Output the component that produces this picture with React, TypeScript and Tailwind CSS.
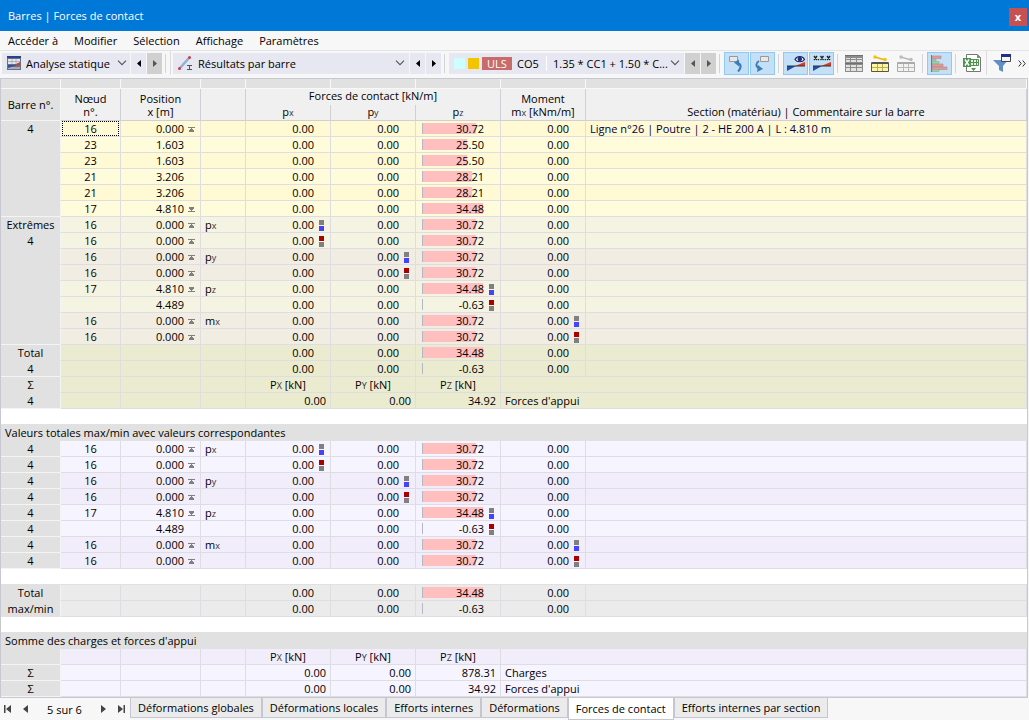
import { ReactNode, useState } from 'react'
import clsx from 'clsx'

type TMark = 'max' | 'min'
type TEnd = 'start' | 'end'

interface IRow {
  label?: string
  joined?: boolean
  node?: string
  position?: string
  end?: TEnd
  symbol?: string
  pz: number
  marks?: { column: number; kind: TMark }
  comment?: string
  focused?: boolean
  bg: string
}

interface ISumRow {
  label?: string
  joined?: boolean
  values?: string[]
  text?: string
  bg: string
}

const MAX_PZ = 34.48
const MAX_BAR = 60

const memberRows: IRow[] = [
  { label: '4', joined: true, node: '16', position: '0.000', end: 'start', pz: 30.72, comment: 'Ligne n°26 | Poutre | 2 - HE 200 A | L : 4.810 m', focused: true, bg: 'bg-[#fff9d4]' },
  { joined: true, node: '23', position: '1.603', pz: 25.5, bg: 'bg-[#fffcdc]' },
  { joined: true, node: '23', position: '1.603', pz: 25.5, bg: 'bg-[#fff9d4]' },
  { joined: true, node: '21', position: '3.206', pz: 28.21, bg: 'bg-[#fffcdc]' },
  { joined: true, node: '21', position: '3.206', pz: 28.21, bg: 'bg-[#fff9d4]' },
  { node: '17', position: '4.810', end: 'end', pz: 34.48, bg: 'bg-[#fffcdc]' },
]

const extremes: Omit<IRow, 'bg'>[] = [
  { node: '16', position: '0.000', end: 'start', symbol: 'px', pz: 30.72, marks: { column: 0, kind: 'max' } },
  { node: '16', position: '0.000', end: 'start', pz: 30.72, marks: { column: 0, kind: 'min' } },
  { node: '16', position: '0.000', end: 'start', symbol: 'py', pz: 30.72, marks: { column: 1, kind: 'max' } },
  { node: '16', position: '0.000', end: 'start', pz: 30.72, marks: { column: 1, kind: 'min' } },
  { node: '17', position: '4.810', end: 'end', symbol: 'pz', pz: 34.48, marks: { column: 2, kind: 'max' } },
  { position: '4.489', pz: -0.63, marks: { column: 2, kind: 'min' } },
  { node: '16', position: '0.000', end: 'start', symbol: 'mx', pz: 30.72, marks: { column: 3, kind: 'max' } },
  { node: '16', position: '0.000', end: 'start', pz: 30.72, marks: { column: 3, kind: 'min' } },
]

const extremeRows: IRow[] = extremes.map((row, i) => ({
  ...row,
  label: ['Extrêmes', '4'][i],
  joined: i < 7,
  bg: i % 4 < 2 ? 'bg-[#f5f4e2]' : 'bg-[#f2ede2]',
}))

const overallRows: IRow[] = extremes.map((row, i) => ({
  ...row,
  label: '4',
  bg: i % 4 < 2 ? 'bg-[#f6f4ff]' : 'bg-[#f1edfb]',
}))

const tabs = ['Déformations globales', 'Déformations locales', 'Efforts internes', 'Déformations', 'Forces de contact', 'Efforts internes par section']
const menus = ['Accéder à', 'Modifier', 'Sélection', 'Affichage', 'Paramètres']

function Symbol({ name }: { name: string }) {
  return (
    <span>
      {name[0]}
      <span className="text-[9px] leading-none text-[#333]">{name[1]}</span>
    </span>
  )
}

function EndIcon({ end }: { end: TEnd }) {
  return (
    <svg width="7" height="5" viewBox="0 0 7 5" fill="#808080" shapeRendering="crispEdges" aria-hidden="true">
      {end === 'start' ? <path d="M0 0h7v1H0zM3 1h1v1h1v1h1v2H1V3h1V2h1z" /> : <path d="M0 4h7v1H0zM1 0h5v2H5v1H4v1H3V3H2V2H1z" />}
    </svg>
  )
}

function ExtremeMark({ kind }: { kind: TMark }) {
  return (
    <span className="flex flex-col gap-px">
      <span className={clsx('w-[5px] h-[5px]', kind === 'max' ? 'bg-[#808080]' : 'bg-[#aa0000]')} />
      <span className={clsx('w-[5px] h-[5px]', kind === 'max' ? 'bg-[#4444ff]' : 'bg-[#808080]')} />
    </span>
  )
}

function Cell({ children, className, ...rest }: { children?: ReactNode; className?: string; colSpan?: number }) {
  return (
    <td className={clsx('h-4 p-0 leading-[15px] border-b border-r border-[#dedee2]', className)} {...rest}>
      {children}
    </td>
  )
}

function RowLabel({ label, joined }: { label?: string; joined?: boolean }) {
  return (
    <th
      scope="row"
      className={clsx(
        'h-4 p-0 leading-[15px] font-normal text-center bg-[#e1e1e1] border-b border-r border-r-[#f4f4f4]',
        joined ? 'border-b-[#e1e1e1]' : 'border-b-[#f4f4f4]',
      )}
    >
      {label}
    </th>
  )
}

function NumberCell({ value, mark }: { value: string; mark?: TMark }) {
  return (
    <Cell>
      <div className="flex items-center justify-end h-[15px]">
        {value}
        <span className="w-4 pl-[5px] pt-[2px]">{mark && <ExtremeMark kind={mark} />}</span>
      </div>
    </Cell>
  )
}

function BarCell({ value, mark }: { value: number; mark?: TMark }) {
  const width = Math.max(0, Math.round((value / MAX_PZ) * MAX_BAR))
  return (
    <Cell>
      <div className="relative flex items-center justify-end h-[15px]">
        <span className="absolute left-[6px] top-[2px] h-[11px] bg-[#ffbfbf] border-l border-[#b4b8c4] box-content" style={{ width }} />
        <span className="relative">{value.toFixed(2)}</span>
        <span className="w-4 pl-[5px] pt-[2px]">{mark && <ExtremeMark kind={mark} />}</span>
      </div>
    </Cell>
  )
}

function ResultRow({ row }: { row: IRow }) {
  const markOf = (column: number) => (row.marks?.column === column ? row.marks.kind : undefined)
  return (
    <tr className={row.bg}>
      <RowLabel label={row.label} joined={row.joined} />
      <Cell className="text-center">
        <div className={clsx('h-[15px] mx-px', row.focused && 'outline-1 outline-dotted -outline-offset-1 outline-black')}>{row.node}</div>
      </Cell>
      <Cell>
        <div className="flex items-center justify-end h-[15px]">
          {row.position}
          <span className="flex items-center w-4 h-[15px] pl-1 pt-[2px]">{row.end && <EndIcon end={row.end} />}</span>
        </div>
      </Cell>
      <Cell className="pl-1">{row.symbol && <Symbol name={row.symbol} />}</Cell>
      <NumberCell value="0.00" mark={markOf(0)} />
      <NumberCell value="0.00" mark={markOf(1)} />
      <BarCell value={row.pz} mark={markOf(2)} />
      <NumberCell value="0.00" mark={markOf(3)} />
      <Cell className="pl-1 text-[#000040]">{row.comment}</Cell>
    </tr>
  )
}

// without values the row shows the units of the support forces
function SumRow({ row }: { row: ISumRow }) {
  return (
    <tr className={row.bg}>
      <RowLabel label={row.label} joined={row.joined} />
      <Cell />
      <Cell />
      <Cell />
      {row.values
        ? row.values.map((value, i) => <Cell key={i} className="text-right pr-1">{value}</Cell>)
        : ['PX', 'PY', 'PZ'].map((name) => <Cell key={name} className="text-center"><Symbol name={name} /> [kN]</Cell>)}
      <Cell className="pl-1" colSpan={2}>{row.text}</Cell>
    </tr>
  )
}

function BlankRow() {
  return (
    <tr className="bg-white">
      <td colSpan={9} className="h-4 p-0 border-b border-[#e1e1e1]" />
    </tr>
  )
}

function SectionRow({ title }: { title: string }) {
  return (
    <tr className="bg-[#e1e1e1]">
      <th colSpan={9} scope="colgroup" className="h-4 p-0 pl-1 leading-4 text-left font-normal">{title}</th>
    </tr>
  )
}

function ResultTable() {
  const head = 'p-0 font-normal leading-[13px] align-bottom border-b border-r border-[#cfcfd4]'
  return (
    <table className="w-full table-fixed border-separate border-spacing-0">
      <colgroup>
        <col className="w-[60px]" />
        <col className="w-[60px]" />
        <col className="w-[80px]" />
        <col className="w-[45px]" />
        <col className="w-[85px]" />
        <col className="w-[85px]" />
        <col className="w-[85px]" />
        <col className="w-[85px]" />
        <col />
      </colgroup>
      <thead className="bg-[#f0f0f0]">
        <tr className="bg-[#e1e1e1]">
          {Array.from({ length: 9 }, (_, i) => (
            <td key={i} className="h-[10px] p-0 border-b border-r border-[#f8f8f8]" />
          ))}
        </tr>
        <tr>
          <th rowSpan={2} className="p-0 font-normal bg-[#e1e1e1] border-b border-r border-[#f4f4f4]">Barre n°.</th>
          <th rowSpan={2} className={clsx(head, 'pb-[2px]')}>Nœud<br />n°.</th>
          <th rowSpan={2} className={clsx(head, 'pb-[2px]')}>Position<br />x [m]</th>
          <th rowSpan={2} className={head} />
          <th colSpan={3} className="h-4 p-0 font-normal leading-[13px] align-top border-r border-[#cfcfd4]">Forces de contact [kN/m]</th>
          <th rowSpan={2} className={clsx(head, 'pb-[2px]')}>Moment<br /><Symbol name="mx" /> [kNm/m]</th>
          <th rowSpan={2} className={clsx(head, 'pb-[2px]')}>Section (matériau) | Commentaire sur la barre</th>
        </tr>
        <tr>
          {['px', 'py', 'pz'].map((name) => (
            <th key={name} className={clsx(head, 'h-4 pb-[2px]')}><Symbol name={name} /></th>
          ))}
        </tr>
      </thead>
      <tbody>
        {memberRows.map((row, i) => <ResultRow key={i} row={row} />)}
        {extremeRows.map((row, i) => <ResultRow key={i} row={row} />)}
        <ResultRow row={{ label: 'Total', joined: true, pz: 34.48, bg: 'bg-[#ebebd0]' }} />
        <ResultRow row={{ label: '4', pz: -0.63, bg: 'bg-[#ebebd0]' }} />
        <SumRow row={{ label: 'Σ', joined: true, bg: 'bg-[#ebebd0]' }} />
        <SumRow row={{ label: '4', values: ['0.00', '0.00', '34.92'], text: "Forces d'appui", bg: 'bg-[#ebebd0]' }} />
        <BlankRow />
        <SectionRow title="Valeurs totales max/min avec valeurs correspondantes" />
        {overallRows.map((row, i) => <ResultRow key={i} row={row} />)}
        <BlankRow />
        <ResultRow row={{ label: 'Total', joined: true, pz: 34.48, bg: 'bg-[#ebebeb]' }} />
        <ResultRow row={{ label: 'max/min', joined: true, pz: -0.63, bg: 'bg-[#ebebeb]' }} />
        <BlankRow />
        <SectionRow title="Somme des charges et forces d'appui" />
        <SumRow row={{ bg: 'bg-[#f1edfb]' }} />
        <SumRow row={{ label: 'Σ', values: ['0.00', '0.00', '878.31'], text: 'Charges', bg: 'bg-[#f6f4ff]' }} />
        <SumRow row={{ label: 'Σ', values: ['0.00', '0.00', '34.92'], text: "Forces d'appui", bg: 'bg-[#f6f4ff]' }} />
      </tbody>
    </table>
  )
}

function Chevron() {
  return (
    <svg className="shrink-0 pointer-events-none" width="10" height="6" viewBox="0 0 10 6" fill="none" stroke="#555" strokeWidth="1.1" aria-hidden="true">
      <path d="M1 .7 5 4.7 9 .7" />
    </svg>
  )
}

function StepButton({ dir, label, disabled }: { dir: 'prev' | 'next'; label: string; disabled?: boolean }) {
  return (
    <button
      type="button"
      aria-label={label}
      disabled={disabled}
      className={clsx('flex items-center justify-center w-[15px] h-[21px]', disabled ? 'bg-[#d0d0d0] text-[#555]' : 'bg-[#e7e7f2] text-black')}
    >
      <svg width="4" height="7" viewBox="0 0 4 7" fill="currentColor">
        <path d={dir === 'prev' ? 'M4 0v7L0 3.500z' : 'M0 0v7l4-3.500z'} />
      </svg>
    </button>
  )
}

function Separator({ className }: { className?: string }) {
  return <span className={clsx('w-px h-[19px] bg-[#d4d4d8]', className)} />
}

function ToolButton({ label, pressed, children }: { label: string; pressed?: boolean; children: ReactNode }) {
  return (
    <button
      type="button"
      aria-label={label}
      aria-pressed={pressed}
      className={clsx('flex items-center justify-center h-[23px] border', pressed ? 'w-[25px] bg-[#c4e0f7] border-[#90c8f6]' : 'w-[26px] border-transparent')}
    >
      {children}
    </button>
  )
}

function TableIcon({ kind }: { kind: 'rows' | 'member' | 'memberOff' }) {
  if (kind === 'rows') {
    return (
      <svg width="18" height="18" viewBox="0 0 18 18">
        <path fill="#8c8c8c" d="M0 1h18v17H0z" />
        <path fill="#e2e2e2" d="M1 4h4v1H1zM6 4h5v1H6zM12 4h5v1h-5zM1 6h4v2H1zM6 6h5v2H6zM12 6h5v2h-5zM1 11h4v2H1zM6 11h5v2H6zM12 11h5v2h-5zM1 14h4v3H1zM6 14h5v3H6zM12 14h5v3h-5z" />
        <path fill="#707070" d="M0 1h18v1H0zM0 9h18v1H0z" />
      </svg>
    )
  }
  const on = kind === 'member'
  return (
    <svg width="18" height="17" viewBox="0 0 18 17">
      <path stroke={on ? '#e8b800' : '#bbb'} strokeWidth="1.5" d="M4 2l10 3" />
      <circle cx="4" cy="2" r="1.700" fill={on ? '#f5c400' : '#bbb'} />
      <circle cx="14" cy="4.500" r="1.700" fill={on ? '#f5c400' : '#bbb'} />
      <path fill={on ? '#fff59a' : '#f2f2f2'} stroke={on ? '#555' : '#aaa'} d="M.5 7.500h17v9H.5z" />
      <path fill={on ? '#555' : '#aaa'} d="M1 7h16v2H1z" />
      <path stroke={on ? '#b5ad60' : '#bbb'} d="M6.500 9v7M11.500 9v7M1 12.500h16" />
    </svg>
  )
}

function GradientWedge() {
  return (
    <>
      <path fill="#1f4fae" d="M0 11h9l-9 5z" />
      <path fill="#d93a20" d="M8 11h10V7z" />
      <path fill="#333" d="M0 10.500h18v1H0z" />
    </>
  )
}

function Toolbar() {
  const select = 'flex-1 min-w-0 appearance-none bg-transparent outline-none truncate'
  return (
    <div className="flex items-center h-[27px] pl-[2px] pr-[3px] pb-[2px] border-t border-[#e4e4e4] bg-[#f7f7f7]">
      <div className="flex items-center w-[128px] h-[21px] pl-[5px] pr-[3px] gap-[5px] bg-[#e7e7f2]">
        <svg width="14" height="14" viewBox="0 0 14 14" aria-hidden="true">
          <path fill="#6c7080" d="M0 0h14v14H0z" />
          <path fill="#28418c" d="M0 0h14v2H0z" />
          <path fill="#e4e6ee" d="M1 3h12v5H1z" />
          <path fill="#a8acb8" d="M1 11h12v2H1z" />
          <path stroke="#9aa0b4" strokeWidth=".7" d="M1 5.500h12M5 3v5M9 3v5" />
          <path fill="#d23a2a" d="M7 9l6-3v3z" />
          <path fill="#2c4f9e" d="M1 9h9l-9 3z" />
        </svg>
        <select aria-label="Type d'analyse" className={select}>
          <option>Analyse statique</option>
        </select>
        <Chevron />
      </div>
      <div className="flex gap-px ml-px">
        <StepButton dir="prev" label="Analyse précédente" />
        <StepButton dir="next" label="Analyse suivante" disabled />
      </div>
      <Separator className="ml-[3px]" />
      <span className="w-px h-6 ml-1 bg-[#dcdce0]" />
      <div className="flex items-center w-[236px] h-[21px] ml-[2px] pl-[5px] pr-1 gap-[5px] bg-[#e7e7f2]">
        <svg width="15" height="14" viewBox="0 0 15 14" aria-hidden="true">
          <path stroke="#8fb0d2" strokeWidth="2.500" d="M2 12 11 2" />
          <circle cx="1.500" cy="12.500" r="1.500" fill="#d23a3a" />
          <circle cx="11.500" cy="1.500" r="1.500" fill="#d23a3a" />
          <path stroke="#555" d="M9 9.500h5M9 13.500h5M11.500 9v4" />
        </svg>
        <select aria-label="Présentation des résultats" className={select}>
          <option>Résultats par barre</option>
        </select>
        <Chevron />
      </div>
      <div className="flex gap-px ml-px">
        <StepButton dir="prev" label="Résultat précédent" />
        <StepButton dir="next" label="Résultat suivant" />
      </div>
      <Separator className="ml-[3px]" />
      <div className="flex items-center w-[235px] h-[21px] ml-1 pl-[5px] pr-1 bg-[#e7e7f2]">
        <span className="w-[11px] h-[11px] bg-[#ccffff]" />
        <span className="w-[11px] h-[11px] ml-[3px] bg-[#f5c400]" />
        <span className="w-[30px] h-[13px] ml-[3px] leading-[13px] text-center text-white bg-[#c96b6b]">ULS</span>
        <span className="w-[29px] ml-[5px]">CO5</span>
        <span className="w-px h-[15px] bg-white mr-[6px]" />
        <select aria-label="Combinaison de charges" className={select}>
          <option>1.35 * CC1 + 1.50 * C...</option>
        </select>
        <Chevron />
      </div>
      <div className="flex gap-px ml-px">
        <StepButton dir="prev" label="Combinaison précédente" disabled />
        <StepButton dir="next" label="Combinaison suivante" disabled />
      </div>
      <Separator className="ml-[3px]" />
      <div className="flex gap-px ml-1">
        <ToolButton label="Sélection vers le graphique" pressed>
          <svg width="17" height="17" viewBox="0 0 17 17" fill="none">
            <path fill="#e8e8e8" stroke="#999" d="M1.500 1.500h8v5h-8z" />
            <path stroke="#3b7dbb" strokeWidth="2.200" d="M9.500 8c4 1 4 5 .5 8.500" />
            <path fill="#3b7dbb" d="M6 7.500l5-3v7z" />
          </svg>
        </ToolButton>
        <ToolButton label="Sélection depuis le graphique" pressed>
          <svg width="17" height="17" viewBox="0 0 17 17" fill="none">
            <path stroke="#3b7dbb" strokeWidth="2" d="M5 6C1.500 8 1.500 11.500 5 13" />
            <path fill="#3b7dbb" d="M9 14l-6 3 1-7z" />
            <path fill="#e8e8e8" stroke="#999" d="M6.500 1.500h8v5h-8z" />
          </svg>
        </ToolButton>
      </div>
      <Separator className="ml-[3px]" />
      <div className="flex gap-px ml-1">
        <ToolButton label="Afficher les résultats" pressed>
          <svg width="18" height="17" viewBox="0 0 18 17">
            <GradientWedge />
            <path fill="#fff" stroke="#1e2456" strokeWidth="1.200" d="M8 4.500c2-4 7.500-4 9.500 0-2 3-7.500 3-9.500 0z" />
            <circle cx="12.800" cy="4" r="2.300" fill="#252c80" />
          </svg>
        </ToolButton>
        <ToolButton label="Afficher les valeurs" pressed>
          <svg width="18" height="17" viewBox="0 0 18 17">
            <GradientWedge />
            <path stroke="#222" strokeWidth="1.300" d="M1 1l3 4M4 1 1 5M7.500 1l3 4M10.500 1l-3 4M14 1l3 4M17 1l-3 4M5.500 4v1.300M12.300 4v1.300" />
          </svg>
        </ToolButton>
      </div>
      <Separator className="ml-[3px]" />
      <div className="flex ml-[3px]">
        <ToolButton label="Toutes les lignes"><TableIcon kind="rows" /></ToolButton>
        <ToolButton label="Barres sélectionnées"><TableIcon kind="member" /></ToolButton>
        <ToolButton label="Objets sélectionnés"><TableIcon kind="memberOff" /></ToolButton>
      </div>
      <Separator className="ml-[3px]" />
      <div className="ml-1">
        <ToolButton label="Barres de résultats" pressed>
          <svg width="17" height="17" viewBox="0 0 17 17">
            <path fill="#e79a9a" stroke="#a88" strokeWidth=".6" d="M1 1h9v2.500H1zM1 9h11v2.500H1zM1 12h15v2.500H1z" />
            <path fill="#9fd3a5" stroke="#8a9" strokeWidth=".6" d="M1 4h4v2H1zM1 6.500h7v2H1zM1 14.500h7v2H1z" />
            <path fill="#778" d="M0 0h1v17H0z" />
          </svg>
        </ToolButton>
      </div>
      <Separator className="ml-[3px]" />
      <div className="ml-[3px]">
        <ToolButton label="Exporter vers Excel">
          <svg width="18" height="18" viewBox="0 0 18 18">
            <path fill="#fff" stroke="#777" d="M3.500.5h11l3 3v14h-14z" />
            <path fill="#888" d="M14 0v4h4z" />
            <path fill="#e3f1e3" stroke="#4f9350" d="M7.500 5.500h8v6h-8z" />
            <path stroke="#4f9350" d="M8 8.500h8M10.500 5v7M13.500 5v7" />
            <path fill="#4f9350" d="M0 4h8v9H0zM8 14h5l-2.500 3z" />
            <path stroke="#fff" strokeWidth="1.400" d="M2 5.500l4 6M6 5.500l-4 6" />
          </svg>
        </ToolButton>
      </div>
      <span className="w-px h-6 ml-px bg-[#dcdce0]" />
      <div className="ml-[2px]">
        <ToolButton label="Filtrer">
          <svg width="18" height="18" viewBox="0 0 18 18">
            <path fill="#5f8fc4" d="M0 6h15l-5 6v6l-4-2v-4z" />
            <path fill="#f4f4f4" stroke="#444" d="M8.500.5h9v7h-9z" />
            <path fill="#1e2f8a" d="M8 0h10v3H8z" />
          </svg>
        </ToolButton>
      </div>
      <button type="button" aria-label="Plus d'outils" className="ml-auto text-[#333]">
        <svg width="8" height="7" viewBox="0 0 8 7" fill="none" stroke="currentColor">
          <path d="M.7.5l2.500 3-2.500 3M4.700.5l2.500 3-2.500 3" />
        </svg>
      </button>
    </div>
  )
}

function PagerButton({ label, path }: { label: string; path: string }) {
  return (
    <button type="button" aria-label={label} className="flex items-center justify-center w-4 h-4">
      <svg width="8" height="8" viewBox="0 0 8 8" fill="#444">
        <path d={path} />
      </svg>
    </button>
  )
}

function BottomBar() {
  const [active, setActive] = useState('Forces de contact')
  return (
    <div className="flex items-start bg-[#f7f7f7]">
      <div className="flex items-center gap-[2px] w-[130px] h-[22px] pr-px shrink-0">
        <PagerButton label="Premier tableau" path="M0 0h1.500v8H0zM7 0v8L2 4z" />
        <PagerButton label="Tableau précédent" path="M6 0v8L1 4z" />
        <span className="flex-1 text-center">5 sur 6</span>
        <PagerButton label="Tableau suivant" path="M2 0v8l5-4z" />
        <PagerButton label="Dernier tableau" path="M6.500 0H8v8H6.500zM1 0v8l5-4z" />
      </div>
      <div role="tablist" className="flex items-start">
        {tabs.map((tab) => (
          <button
            key={tab}
            type="button"
            role="tab"
            aria-selected={tab === active}
            onClick={() => setActive(tab)}
            className={clsx(
              'px-[7px] border border-t-0 border-[#c6c6d2] whitespace-nowrap',
              tab === active ? 'h-[22px] bg-white' : 'h-5 bg-[#ebebeb]',
            )}
          >
            {tab}
          </button>
        ))}
      </div>
    </div>
  )
}

export default function App() {
  return (
    <div className="min-h-screen bg-[#f7f7f7] text-black text-[11px] leading-[15px] font-['Open_Sans','Noto_Sans',sans-serif]">
      <header className="flex items-center justify-between h-[31px] pl-2 pr-[2px] bg-[#0078d7] text-white">
        <h1>Barres | Forces de contact</h1>
        <button type="button" aria-label="Fermer" className="w-[18px] h-[18px] mt-[3px] leading-4 font-bold bg-[#c75050]">x</button>
      </header>
      <nav className="flex items-center h-[19px] pl-2 gap-4">
        {menus.map((menu) => <button key={menu} type="button">{menu}</button>)}
      </nav>
      <Toolbar />
      <main className="mt-px mr-px border border-[#c8c8d2]">
        <ResultTable />
      </main>
      <BottomBar />
    </div>
  )
}
